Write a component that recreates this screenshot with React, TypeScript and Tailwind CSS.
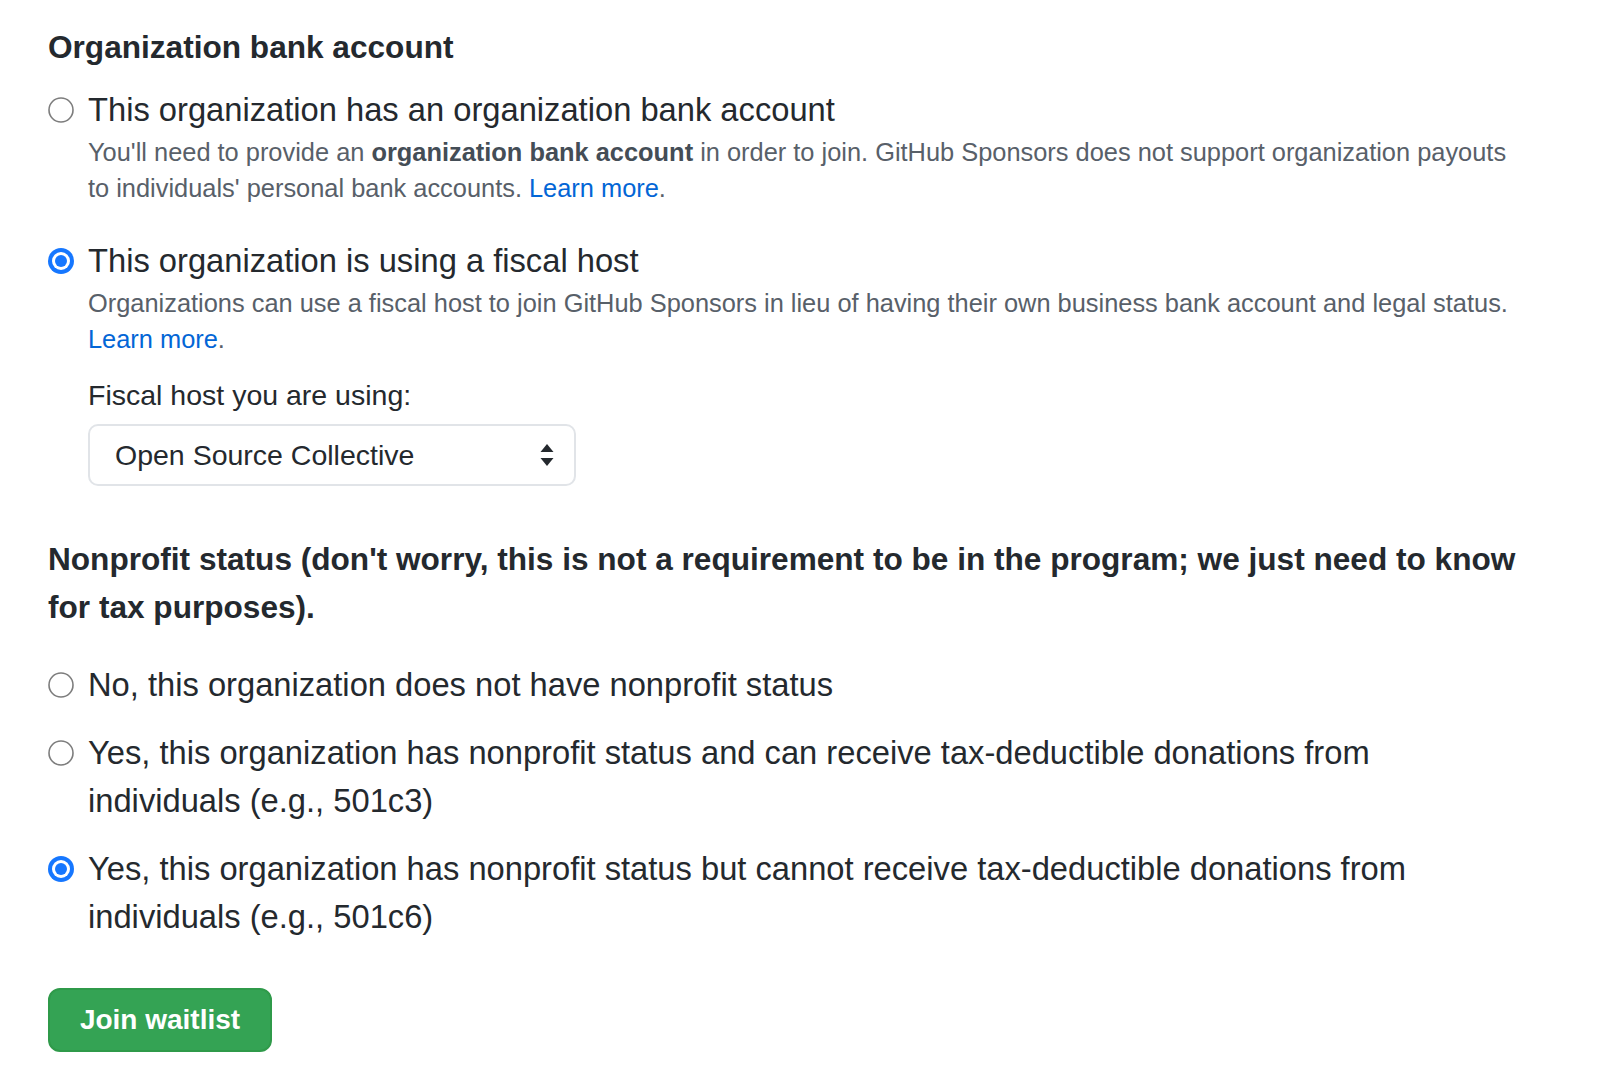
import React, { useState } from 'react';

const font = "font-['Liberation_Sans',Arial,sans-serif]";

const RadioDot = ({ checked }: { checked: boolean }) =>
  checked ? (
    <svg width="26" height="26" viewBox="0 0 26 26">
      <circle cx="13" cy="13" r="13" fill="#1677ff" />
      <circle cx="13" cy="13" r="9" fill="#ffffff" />
      <circle cx="13" cy="13" r="6" fill="#1677ff" />
    </svg>
  ) : (
    <svg width="26" height="26" viewBox="0 0 26 26">
      <circle cx="13" cy="13" r="12" fill="#ffffff" stroke="#7d7d7d" strokeWidth="1.6" />
    </svg>
  );

interface RadioProps {
  checked: boolean;
  onSelect: () => void;
  label: React.ReactNode;
  children?: React.ReactNode;
}

const Radio: React.FC<RadioProps> = ({ checked, onSelect, label, children }) => (
  <div className="flex items-start gap-[14px]">
    <button type="button" onClick={onSelect} className="flex h-[48px] w-[26px] shrink-0 items-center">
      <RadioDot checked={checked} />
    </button>
    <div className="flex-1">
      <div onClick={onSelect} className="cursor-default text-[32.7px] leading-[48px] text-[#24292e]">
        {label}
      </div>
      {children}
    </div>
  </div>
);

export default function App() {
  const [bank, setBank] = useState('fiscal');
  const [nonprofit, setNonprofit] = useState('c6');

  return (
    <div className={`min-h-screen bg-white ${font} text-[#24292e]`}>
      <div className="w-[1580px] pl-[48px] pt-[23px] pb-[30px]">
        <h2 className="text-[31.6px] font-bold leading-[48px]">Organization bank account</h2>

        <div className="mt-[15px] flex flex-col gap-[31px]">
          <Radio
            checked={bank === 'bank'}
            onSelect={() => setBank('bank')}
            label="This organization has an organization bank account"
          >
            <p className="text-[25.4px] leading-[36px] text-[#586069]">
              You'll need to provide an <b className="text-[#444d56]">organization bank account</b> in order to join.
              GitHub Sponsors does not support organization payouts
              <br />
              to individuals' personal bank accounts. <a className="text-[#0366d6]">Learn more</a>.
            </p>
          </Radio>

          <Radio
            checked={bank === 'fiscal'}
            onSelect={() => setBank('fiscal')}
            label="This organization is using a fiscal host"
          >
            <p className="text-[25.4px] leading-[36px] text-[#586069]">
              Organizations can use a fiscal host to join GitHub Sponsors in lieu of having their own business bank
              account and legal status.
              <br />
              <a className="text-[#0366d6]">Learn more</a>.
            </p>
            <label className="mt-[17px] block text-[28.5px] leading-[42px]">Fiscal host you are using:</label>
            <div className="mt-[8px] flex h-[62px] w-[488px] items-center justify-between rounded-[10px] border-2 border-[#e1e4e8] bg-white pl-[25px] pr-[20px]">
              <span className="text-[28.5px]">Open Source Collective</span>
              <svg width="14" height="22" viewBox="0 0 14 22">
                <path d="M7 0 L13.5 8 L0.5 8 Z" fill="#24292e" />
                <path d="M7 22 L13.5 14 L0.5 14 Z" fill="#24292e" />
              </svg>
            </div>
          </Radio>
        </div>

        <h2 className="mt-[49px] text-[31.6px] font-bold leading-[48px]">
          Nonprofit status (don't worry, this is not a requirement to be in the program; we just need to know
          <br />
          for tax purposes).
        </h2>

        <div className="mt-[30px] flex flex-col gap-[20px]">
          <Radio
            checked={nonprofit === 'none'}
            onSelect={() => setNonprofit('none')}
            label="No, this organization does not have nonprofit status"
          />
          <Radio
            checked={nonprofit === 'c3'}
            onSelect={() => setNonprofit('c3')}
            label={
              <>
                Yes, this organization has nonprofit status and can receive tax-deductible donations from
                <br />
                individuals (e.g., 501c3)
              </>
            }
          />
          <Radio
            checked={nonprofit === 'c6'}
            onSelect={() => setNonprofit('c6')}
            label={
              <>
                Yes, this organization has nonprofit status but cannot receive tax-deductible donations from
                <br />
                individuals (e.g., 501c6)
              </>
            }
          />
        </div>

        <button
          type="button"
          className="mt-[47px] flex h-[64px] w-[224px] items-center justify-center rounded-[12px] border-2 border-[#2f9a4a] bg-[#34a354] text-[28px] font-bold text-white"
        >
          Join waitlist
        </button>
      </div>
    </div>
  );
}
